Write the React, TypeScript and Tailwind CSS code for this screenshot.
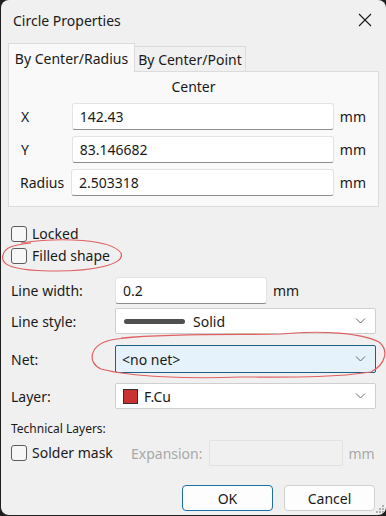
import React from "react";

const font = { fontFamily: '"Noto Sans", "Open Sans", sans-serif' };

function Chevron() {
  return (
    <svg width="11" height="7" viewBox="0 0 11 7" className="absolute right-[9px] top-1/2 -translate-y-1/2">
      <path d="M1 1 L5.5 5.5 L10 1" fill="none" stroke="#666" strokeWidth="1" />
    </svg>
  );
}

function Checkbox({ label, className = "" }: { label: string; className?: string }) {
  return (
    <div className={`flex items-center ${className}`}>
      <div className="w-[16px] h-[16px] rounded-[3px] border border-[#5c5c5c] bg-[#f7f7f7]" />
      <span className="ml-[5px] text-[14px] text-[#1a1a1a] leading-none">{label}</span>
    </div>
  );
}

function TextInput({ value, w }: { value: string; w: string }) {
  return (
    <div className={`${w} h-[27px] bg-white border border-[#e3e3e3] border-b-[#8d8d8d] rounded-[3px] flex items-center px-[7px] text-[14px] text-[#1a1a1a]`}>
      {value}
    </div>
  );
}

export default function App() {
  return (
    <div className="w-[386px] h-[516px] bg-[#1f1f1f] overflow-hidden" style={font}>
      <div className="relative w-[385px] h-[515px] ml-[1px] bg-[#f0f0f0] rounded-[8px] flex flex-col text-[#1a1a1a]">
        {/* title bar */}
        <div className="h-[40px] flex items-center justify-between pl-[12px] pr-[14px]">
          <span className="text-[14px]">Circle Properties</span>
          <svg width="14" height="14" viewBox="0 0 14 14">
            <path d="M1 1 L13 13 M13 1 L1 13" stroke="#1a1a1a" strokeWidth="1.1" />
          </svg>
        </div>
        <div className="px-[7px]">
          {/* tabs */}
          <div className="mt-[3px] flex items-end">
            <div className="h-[29px] w-[127px] bg-[#f9f9f9] border border-b-0 border-[#dcdcdc] flex items-center justify-center text-[14px] relative z-10 -mb-px">
              By Center/Radius
            </div>
            <div className="h-[25px] w-[111px] bg-[#f0f0f0] border border-l-0 border-b-0 border-[#dcdcdc] flex items-center justify-center text-[14px]">
              By Center/Point
            </div>
          </div>
          {/* panel */}
          <div className="w-[371px] h-[136px] bg-[#f9f9f9] border border-[#dcdcdc] px-[12px]">
            <div className="mt-[5px] h-[20px] text-center text-[14px] leading-[20px]">Center</div>
            <div className="mt-[6px] flex items-center">
              <span className="w-[51px] text-[14px]">X</span>
              <TextInput value="142.43" w="w-[263px]" />
              <span className="ml-[6px] text-[14px]">mm</span>
            </div>
            <div className="mt-[6px] flex items-center">
              <span className="w-[51px] text-[14px]">Y</span>
              <TextInput value="83.146682" w="w-[263px]" />
              <span className="ml-[6px] text-[14px]">mm</span>
            </div>
            <div className="mt-[6px] flex items-center">
              <span className="w-[51px] text-[14px] -ml-[1px]">Radius</span>
              <TextInput value="2.503318" w="w-[263px]" />
              <span className="ml-[6px] text-[14px]">mm</span>
            </div>
          </div>
        </div>
        <div className="px-[10px]">
          <Checkbox label="Locked" className="mt-[19px] h-[16px]" />
          <Checkbox label="Filled shape" className="mt-[6px] h-[16px]" />
          <div className="mt-[13px] flex items-center">
            <span className="w-[104px] text-[14px]">Line width:</span>
            <TextInput value="0.2" w="w-[152px]" />
            <span className="ml-[6px] text-[14px]">mm</span>
          </div>
          <div className="mt-[4px] flex items-center">
            <span className="w-[104px] text-[14px]">Line style:</span>
            <div className="relative w-[261px] h-[26px] bg-white border border-[#cfcfcf] rounded-[2px] flex items-center pl-[8px] text-[14px]">
              <div className="w-[61px] h-[5px] rounded-full bg-[#505050]" />
              <span className="ml-[8px]">Solid</span>
              <Chevron />
            </div>
          </div>
          <div className="mt-[11px] flex items-center">
            <span className="w-[104px] text-[14px]">Net:</span>
            <div className="relative w-[261px] h-[28px] bg-[#e5f1fb] border border-[#1f5f82] rounded-[2px] flex items-center pl-[6px] text-[14px]">
              <span>&lt;no net&gt;</span>
              <Chevron />
            </div>
          </div>
          <div className="mt-[10px] flex items-center">
            <span className="w-[104px] text-[14px]">Layer:</span>
            <div className="relative w-[261px] h-[26px] bg-white border border-[#cfcfcf] rounded-[2px] flex items-center pl-[7px] text-[14px]">
              <div className="w-[15px] h-[15px] bg-[#c83232] border border-[#3a2a2a]" />
              <span className="ml-[6px]">F.Cu</span>
              <Chevron />
            </div>
          </div>
          <div className="mt-[11px] h-[18px] text-[12px] leading-[18px]">Technical Layers:</div>
          <div className="mt-[2px] flex items-center">
            <Checkbox label="Solder mask" className="w-[120px]" />
            <span className="text-[14px] text-[#a8a8a8]">Expansion:</span>
            <div className="ml-[6px] w-[134px] h-[26px] border border-[#e2e2e2] bg-[#f0f0f0] rounded-[2px]" />
            <span className="ml-[6px] text-[14px] text-[#a8a8a8]">mm</span>
          </div>
          <div className="mt-[19px] flex justify-end gap-[11px] pr-[1px]">
            <div className="w-[91px] h-[26px] bg-[#fdfdfd] border border-[#1c6fa8] rounded-[4px] flex items-center justify-center text-[14px]">OK</div>
            <div className="w-[91px] h-[26px] bg-[#fdfdfd] border border-[#d0d0d0] rounded-[4px] flex items-center justify-center text-[14px]">Cancel</div>
          </div>
        </div>
        {/* resize grip */}
        <svg width="10" height="10" viewBox="0 0 10 10" className="absolute right-[1px] bottom-[1px]">
          {[[8,2],[8,5],[5,5],[8,8],[5,8],[2,8]].map(([x,y],i)=>(
            <rect key={i} x={x-1} y={y-1} width="2" height="2" fill="#b0b0b0" />
          ))}
        </svg>
        {/* red annotations */}
        <svg className="absolute left-0 top-0 pointer-events-none" width="386" height="516" viewBox="0 0 386 516">
          <path d="M20 243 C 60 237, 110 239, 120 253 C 125 265, 90 271, 55 271 C 20 271, -2 267, 2 255 C 4 247, 12 245, 30 243" fill="none" stroke="#e06060" strokeWidth="1.2" />
          <path d="M120 338 C 180 333, 240 335, 280 334 C 320 330, 360 333, 378 342 C 388 350, 385 364, 370 372 C 330 378, 290 377, 240 377 C 190 379, 130 377, 100 369 C 86 363, 88 345, 110 340 C 125 337, 140 337, 150 336" fill="none" stroke="#e06060" strokeWidth="1.2" />
        </svg>
      </div>
    </div>
  );
}
